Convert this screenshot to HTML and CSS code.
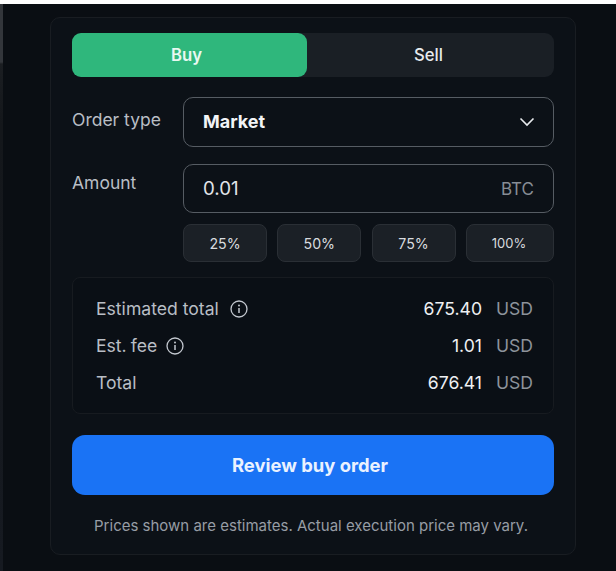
FILE: index.html
```html
<!DOCTYPE html>
<html lang="en">
<head>
<meta charset="utf-8">
<title>Order ticket</title>
<link rel="stylesheet" href="styles.css">
</head>
<body>
<main class="stage">
  <section class="card">
    <div class="tabs">
      <button class="tab tab-buy">Buy</button>
      <button class="tab tab-sell">Sell</button>
    </div>
    <div class="field-row row-order">
      <span class="label">Order type</span>
      <div class="control select">
        <span class="select-value">Market</span>
        <svg class="chevron" viewBox="0 0 16 10" width="16" height="10" aria-hidden="true"><path d="M1.5 1.5 8 8l6.500-6.500" fill="none" stroke="#e8ebee" stroke-width="1.6"/></svg>
      </div>
    </div>
    <div class="field-row row-amount">
      <span class="label label-amount">Amount</span>
      <div class="control input">
        <span class="input-value">0.01</span>
        <span class="input-unit">BTC</span>
      </div>
    </div>
    <div class="percents">
      <button class="pct p25">25%</button>
      <button class="pct p50">50%</button>
      <button class="pct p75">75%</button>
      <button class="pct p100">100%</button>
    </div>
    <div class="summary">
      <div class="sum-row">
        <span class="sum-label">Estimated total
          <svg class="info" viewBox="0 0 18 18" width="18" height="18" aria-hidden="true"><circle cx="9" cy="9" r="8" fill="none" stroke="#c3c8cf" stroke-width="1.300"/><path d="M9 8v5" stroke="#c3c8cf" stroke-width="1.500"/><circle cx="9" cy="5.400" r="1" fill="#c3c8cf"/></svg>
        </span>
        <span class="sum-num">675.40</span><span class="sum-cur">USD</span>
      </div>
      <div class="sum-row">
        <span class="sum-label label-fee">Est. fee
          <svg class="info" viewBox="0 0 18 18" width="18" height="18" aria-hidden="true"><circle cx="9" cy="9" r="8" fill="none" stroke="#c3c8cf" stroke-width="1.300"/><path d="M9 8v5" stroke="#c3c8cf" stroke-width="1.500"/><circle cx="9" cy="5.400" r="1" fill="#c3c8cf"/></svg>
        </span>
        <span class="sum-num">1.01</span><span class="sum-cur">USD</span>
      </div>
      <div class="sum-row">
        <span class="sum-label">Total</span>
        <span class="sum-num">676.41</span><span class="sum-cur">USD</span>
      </div>
    </div>
    <button class="review">Review buy order</button>
    <p class="note">Prices shown are estimates. Actual execution price may vary.</p>
  </section>
</main>
</body>
</html>
```
FILE: styles.css
```css
* { box-sizing: border-box; }
html, body { margin: 0; height: 100%; }
body {
  background: #fff;
  font-family: Inter, "Liberation Sans", sans-serif;
  overflow: hidden;
}
button { font-family: inherit; cursor: pointer; }
.stage {
  margin-top: 4px;
  height: 567px;
  padding: 13px 40px 0 50px;
  background:
    linear-gradient(180deg, #33363b 0, #33363b 58px, #1b1e22 60px, #14171b 120px, #161a21 100%) left top / 3px 100% no-repeat,
    #0a0e13;
}
.card {
  width: 526px;
  height: 538px;
  padding: 15px 21px 0 21px;
  border: 1px solid #191d22;
  border-radius: 10px;
  background: #0c1117;
}
.tabs {
  display: flex;
  height: 44px;
  border-radius: 9px;
  background: #1a1f25;
}
.tab {
  border: 0;
  font-size: 16.700px;
  color: #e8ebee;
  background: transparent;
  border-radius: 9px;
}
.tab-buy {
  width: 235px;
  padding: 0 6px 0 0;
  background: #2fb77c;
  color: #e9f8f1;
  font-weight: 600;
}
.tab-sell { flex: 1; padding: 0 4px 0 0; font-weight: 500; }
.field-row { display: flex; }
.row-order { margin-top: 20px; align-items: flex-start; }
.row-amount { margin-top: 17px; align-items: flex-start; }
.label {
  width: 111px;
  font-size: 17.500px;
  color: #b9bec5;
  line-height: 22px;
  margin-top: 12px;
}
.label-amount { margin-top: 8px; }
.control {
  flex: 1;
  display: flex;
  align-items: center;
  justify-content: space-between;
  border: 1px solid #565c63;
  border-radius: 10px;
  padding: 0 19px;
}
.select { height: 50px; }
.input { height: 49px; }
.select-value { font-size: 18px; font-weight: 700; color: #f2f4f6; margin-top: -1px; }
.chevron { margin-right: -0.500px; }
.input-value { font-size: 18.700px; color: #e2e5e9; }
.input-unit { font-size: 17px; color: #878d95; }
.percents {
  display: flex;
  gap: 10.300px;
  margin: 11px 0 0 111px;
  height: 38px;
}
.pct {
  width: 84px;
  border: 1px solid #2a2f35;
  border-radius: 8px;
  background: #1b2026;
  color: #d8dbdf;
  font-size: 14.200px;
  padding: 0;
}
.p100 { flex: 1; font-size: 13px; padding-right: 2px; }
.summary {
  margin-top: 15px;
  height: 137px;
  padding: 12.500px 20px 0 23px;
  border: 1px solid #171b20;
  border-radius: 8px;
  background: #0a0f15;
}
.sum-row {
  display: flex;
  align-items: center;
  height: 36.800px;
  font-size: 17.600px;
}
.sum-label {
  flex: 1;
  display: flex;
  align-items: center;
  gap: 11.500px;
  color: #b9bec5;
}
.label-fee { gap: 9px; word-spacing: -1px; }
.sum-num { color: #eef0f2; }
.sum-cur { width: 51px; text-align: right; color: #8d939b; }
.review {
  display: block;
  width: 100%;
  height: 60.500px;
  margin-top: 20.500px;
  padding: 0 6px 0 0;
  border: 0;
  border-radius: 13px;
  background: #1a73f5;
  color: #eaf2ff;
  font-size: 18.400px;
  font-weight: 700;
}
.note {
  margin: 19.500px 0 0;
  padding-right: 4px;
  text-align: center;
  font-size: 15px;
  line-height: 22px;
  color: #979da5;
}
```
